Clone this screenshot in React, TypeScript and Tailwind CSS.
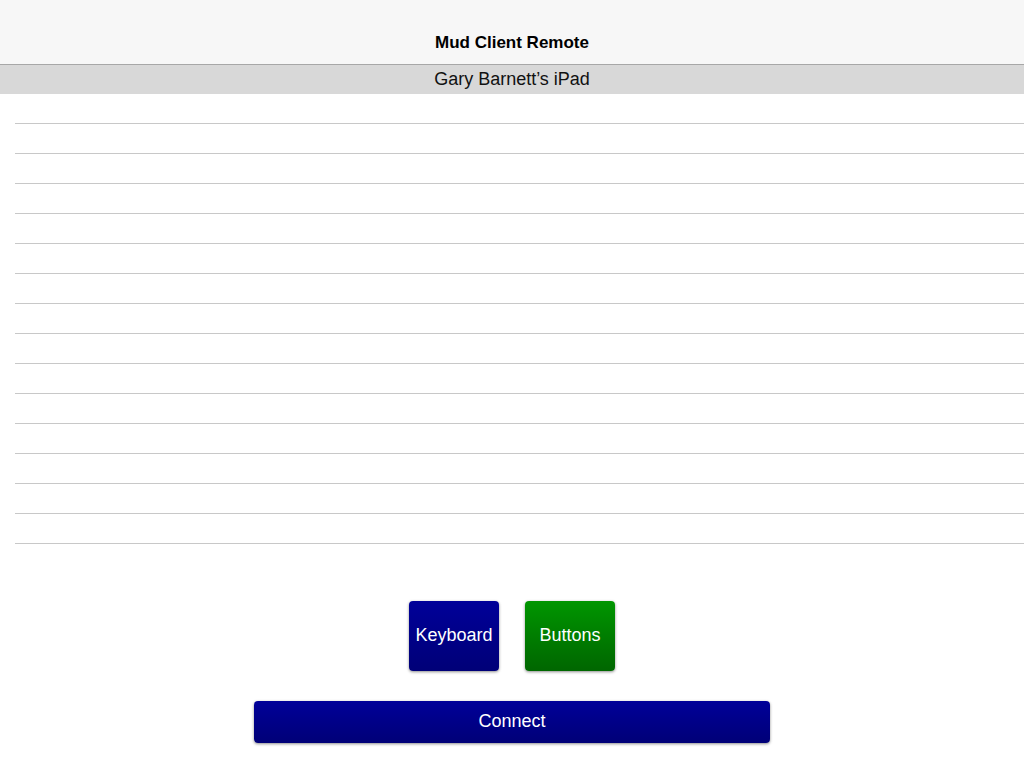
import React from 'react';

const rows = Array.from({ length: 15 });

export default function App() {
  return (
    <div className="w-[1024px] h-[768px] bg-white flex flex-col font-['Liberation_Sans',Arial,sans-serif] text-black">
      {/* Nav bar */}
      <div className="h-[65px] bg-[#f7f7f7] border-b border-[#a7a7a7] flex items-end justify-center pb-[13px]">
        <span className="text-[17px] font-bold leading-none">Mud Client Remote</span>
      </div>

      {/* Device name */}
      <div className="h-[29px] bg-[#d8d8d8] flex items-center justify-center pb-[2px]">
        <span className="text-[18px] leading-none text-[#111]">Gary Barnett’s iPad</span>
      </div>

      {/* Output list */}
      <div className="pl-[15px]">
        {rows.map((_, i) => (
          <div key={i} className="h-[30px] border-b border-[#c8c8c8]" />
        ))}
      </div>

      {/* Mode buttons */}
      <div className="flex justify-center gap-[26px] mt-[57px]">
        <button className="w-[90px] h-[70px] pb-[2px] rounded-[4px] bg-gradient-to-b from-[#000099] to-[#000077] text-white text-[18px] shadow-[0_1px_3px_rgba(0,0,0,0.45)]">
          Keyboard
        </button>
        <button className="w-[90px] h-[70px] pb-[2px] rounded-[4px] bg-gradient-to-b from-[#009600] to-[#006600] text-white text-[18px] shadow-[0_1px_3px_rgba(0,0,0,0.45)]">
          Buttons
        </button>
      </div>

      <div className="flex justify-center mt-[30px]">
        <button className="w-[516px] h-[42px] pb-[2px] rounded-[4px] bg-gradient-to-b from-[#000099] to-[#000077] text-white text-[18px] shadow-[0_1px_3px_rgba(0,0,0,0.45)]">
          Connect
        </button>
      </div>
    </div>
  );
}
